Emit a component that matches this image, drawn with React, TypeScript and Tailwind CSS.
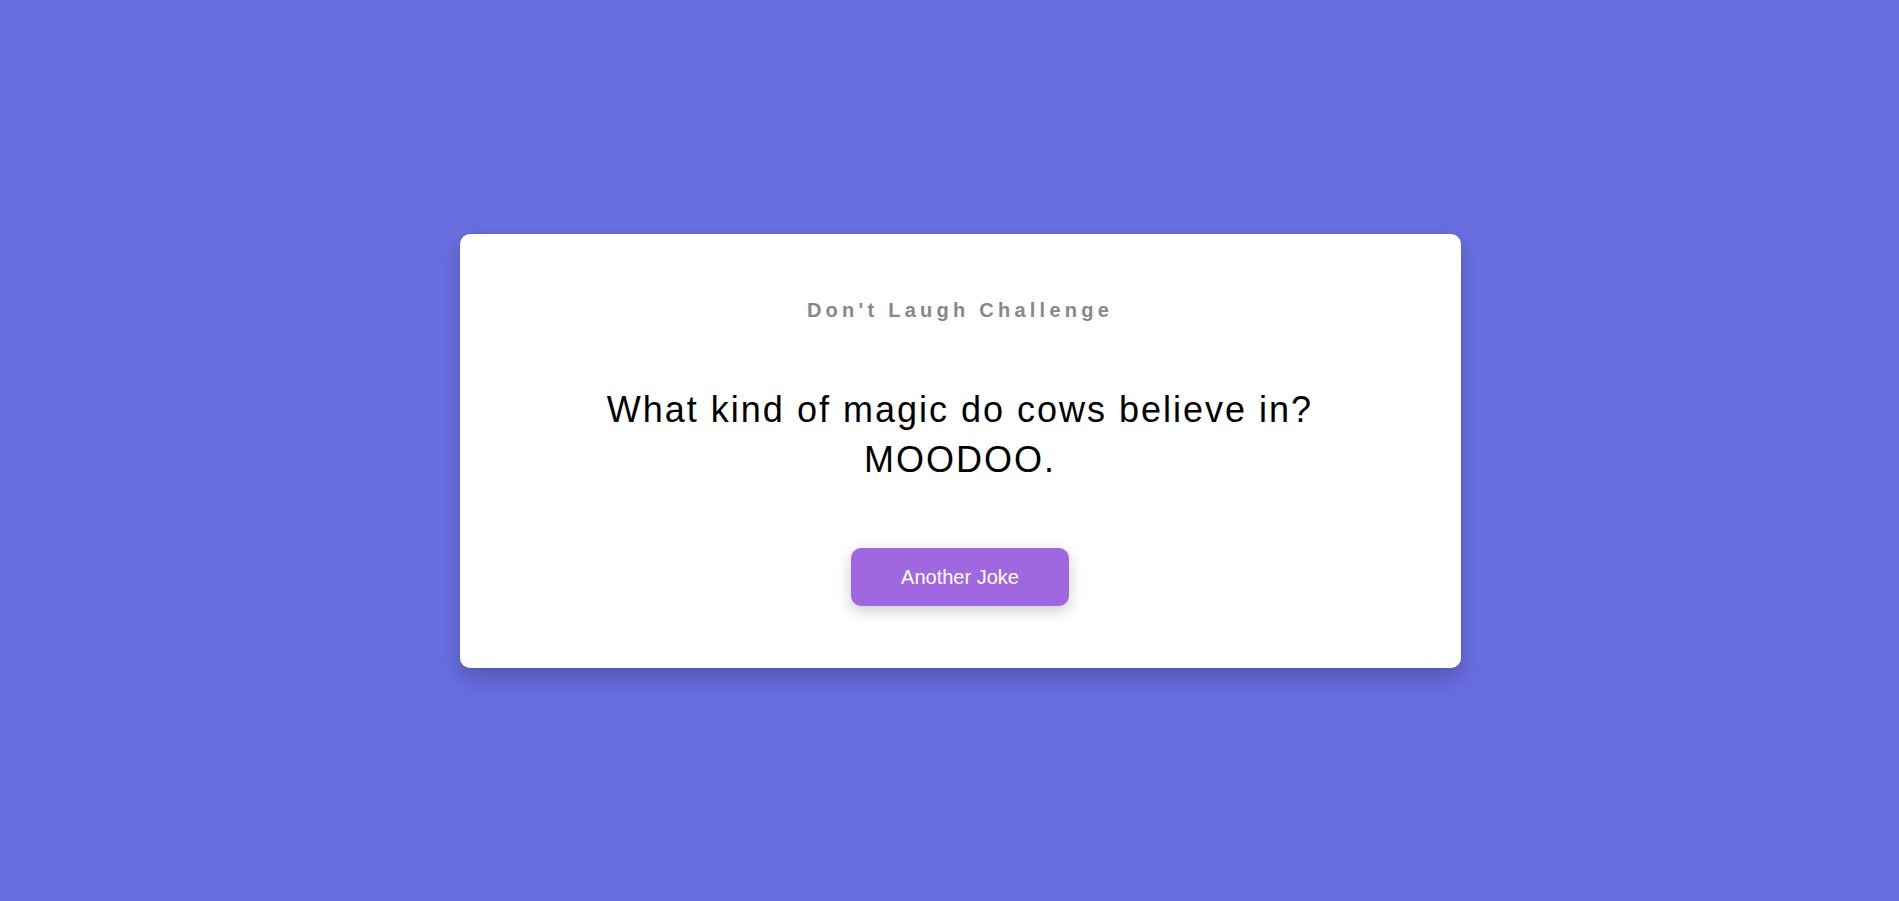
export default function App() {
  return (
    <div className="flex min-h-screen items-center justify-center bg-[#686de0] pl-[21px] font-['Liberation_Sans',Arial,sans-serif]">
      {/* joke card */}
      <div className="flex w-[1001px] flex-col items-center rounded-[10px] bg-white px-5 pb-[62px] pt-[64px] text-center shadow-[0_10px_20px_rgba(0,0,0,0.2)]">
        <h3 className="text-[20px] font-bold leading-[24px] tracking-[4.25px] text-[#888]">
          Don't Laugh Challenge
        </h3>

        <div className="mt-[63px] max-w-[800px] text-[36px] leading-[50px] tracking-[2px] text-black">
          <p>What kind of magic do cows believe in?</p>
          <p>MOODOO.</p>
        </div>

        <button className="mt-[63px] h-[58px] w-[218px] rounded-[10px] bg-[#9f68e0] text-[20px] text-white shadow-[0_5px_15px_rgba(0,0,0,0.2)]">
          Another Joke
        </button>
      </div>
    </div>
  );
}
